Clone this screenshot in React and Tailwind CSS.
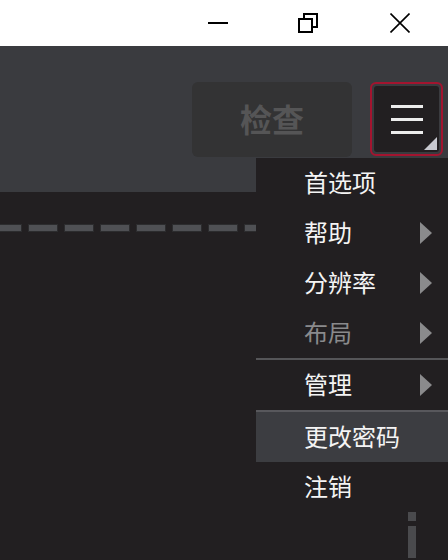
const font = { fontFamily: '"Noto Sans CJK SC", "Noto Sans", sans-serif' };

const items = [
  { label: "首选项" },
  { label: "帮助", sub: true },
  { label: "分辨率", sub: true },
  { label: "布局", sub: true, disabled: true },
  { sep: true },
  { label: "管理", sub: true },
  { label: "更改密码", active: true },
  { label: "注销" },
];

const Arrow = () => (
  <svg width="12" height="22" viewBox="0 0 12 22" className="shrink-0">
    <path d="M0 0 L12 11 L0 22 Z" fill="#8a8a8c" />
  </svg>
);

export default function App() {
  return (
    <div className="relative flex h-[560px] w-[448px] flex-col overflow-hidden bg-[#221f21]" style={font}>
      {/* window chrome */}
      <div className="flex h-[46px] shrink-0 items-center bg-white">
        <div className="ml-[208px] flex h-5 w-5 items-center">
          <div className="h-[2px] w-5 bg-black" />
        </div>
        <div className="ml-[70px] flex h-5 w-5 items-center justify-center">
          <svg width="20" height="20" viewBox="0 0 20 20" fill="none" stroke="#000" strokeWidth="2">
            <rect x="1" y="6" width="13" height="13" />
            <path d="M6 5 V1 H19 V14 H15" />
          </svg>
        </div>
        <svg className="ml-[72px]" width="20" height="20" viewBox="0 0 20 20" stroke="#000" strokeWidth="1.6">
          <path d="M0.5 0.5 L19.5 19.5 M19.5 0.5 L0.5 19.5" />
        </svg>
      </div>

      {/* toolbar */}
      <div className="flex h-[146px] shrink-0 items-start justify-end bg-[#3a3b3f] pr-[5px] pt-[36px]">
        <div className="flex h-[75px] w-[160px] items-center justify-center rounded-md bg-[#333334] pb-[3px]">
          <span className="text-[32px] font-bold leading-none text-[#555556]">检查</span>
        </div>
        <div className="ml-[18px] flex h-[74px] w-[73px] items-center justify-center rounded-md border-2 border-[#a3142f] p-[2px]">
          <div className="relative flex h-full w-full flex-col items-center justify-center gap-[10px] rounded-[3px] bg-[#221f21]">
            <div className="h-[3px] w-[32px] bg-[#ececec]" />
            <div className="h-[3px] w-[32px] bg-[#ececec]" />
            <div className="h-[3px] w-[32px] bg-[#ececec]" />
            <svg width="13" height="13" viewBox="0 0 13 13" className="absolute bottom-[2px] right-[2px]">
              <path d="M13 0 L13 13 L0 13 Z" fill="#c8c9d0" />
            </svg>
          </div>
        </div>
      </div>

      {/* content */}
      <div className="flex-1 bg-[#221f21] pt-[32px]">
        <div className="ml-[-8px] flex gap-[6px] overflow-hidden">
          {Array.from({ length: 14 }).map((_, i) => (
            <div key={i} className="h-[8px] w-[30px] shrink-0 border border-[#2c2c2e] bg-[#4f5054]" />
          ))}
        </div>
      </div>

      {/* scroll hint */}
      <div className="absolute left-[408px] top-[512px] flex w-[8px] flex-col gap-[5px]">
        <div className="h-[9px] bg-[#4a4a4d]" />
        <div className="h-[32px] bg-[#4a4a4d]" />
      </div>

      {/* dropdown menu */}
      <div className="absolute left-[256px] top-[158px] w-[192px] bg-[#221f21]">
        {items.map((it, i) =>
          it.sep ? (
            <div key={i} className="h-[2px] bg-[#555558]" />
          ) : (
            <div
              key={i}
              className={`flex h-[50px] items-center justify-between pl-[48px] pr-[16px] ${
                it.active ? "h-[52px] border-t-2 border-[#58585c] bg-[#3c3d41]" : ""
              }`}
            >
              <span
                className={`pb-[3px] text-[24px] leading-none ${it.disabled ? "text-[#8a8a8c]" : "text-[#f4f4f4]"}`}
              >
                {it.label}
              </span>
              {it.sub && <Arrow />}
            </div>
          )
        )}
      </div>
    </div>
  );
}
